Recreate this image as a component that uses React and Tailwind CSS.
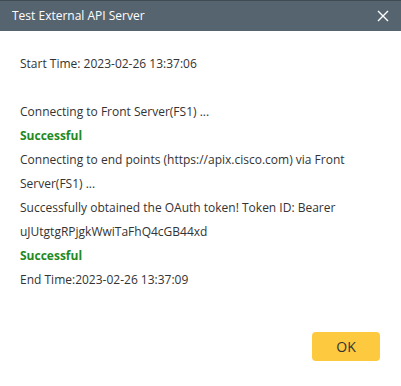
export default function App() {
  return (
    <div className="w-[401px] h-[386px] bg-white flex flex-col font-['Open_Sans',sans-serif] text-[#333]">
      {/* header */}
      <div className="h-[31px] bg-[#56646f] border-t border-[#3f4a52] flex items-center justify-between pl-[12px] pr-[12px]">
        <span className="text-white text-[12px]">Test External API Server</span>
        <svg width="12" height="12" viewBox="0 0 12 12">
          <path d="M1 1 L11 11 M11 1 L1 11" stroke="#fff" strokeWidth="1.4" />
        </svg>
      </div>

      {/* body */}
      <div className="flex-1 pl-[20px] pr-[12px] pt-[21px] text-[12px] leading-[24px]">
        <p>Start Time: 2023-02-26 13:37:06</p>
        <div className="h-[24px]" />
        <p>Connecting to Front Server(FS1) ...</p>
        <p className="text-[#1f8a1f] font-bold">Successful</p>
        <p>Connecting to end points (https://apix.cisco.com) via Front Server(FS1) ...</p>
        <p>Successfully obtained the OAuth token! Token ID: Bearer uJUtgtgRPjgkWwiTaFhQ4cGB44xd</p>
        <p className="text-[#1f8a1f] font-bold">Successful</p>
        <p>End Time:2023-02-26 13:37:09</p>
      </div>

      {/* footer */}
      <div className="flex justify-end pr-[21px] pb-[25px]">
        <button className="w-[68px] h-[29px] rounded-[4px] bg-[#fdc93f] text-[#333] text-[14px]">
          OK
        </button>
      </div>
    </div>
  );
}
